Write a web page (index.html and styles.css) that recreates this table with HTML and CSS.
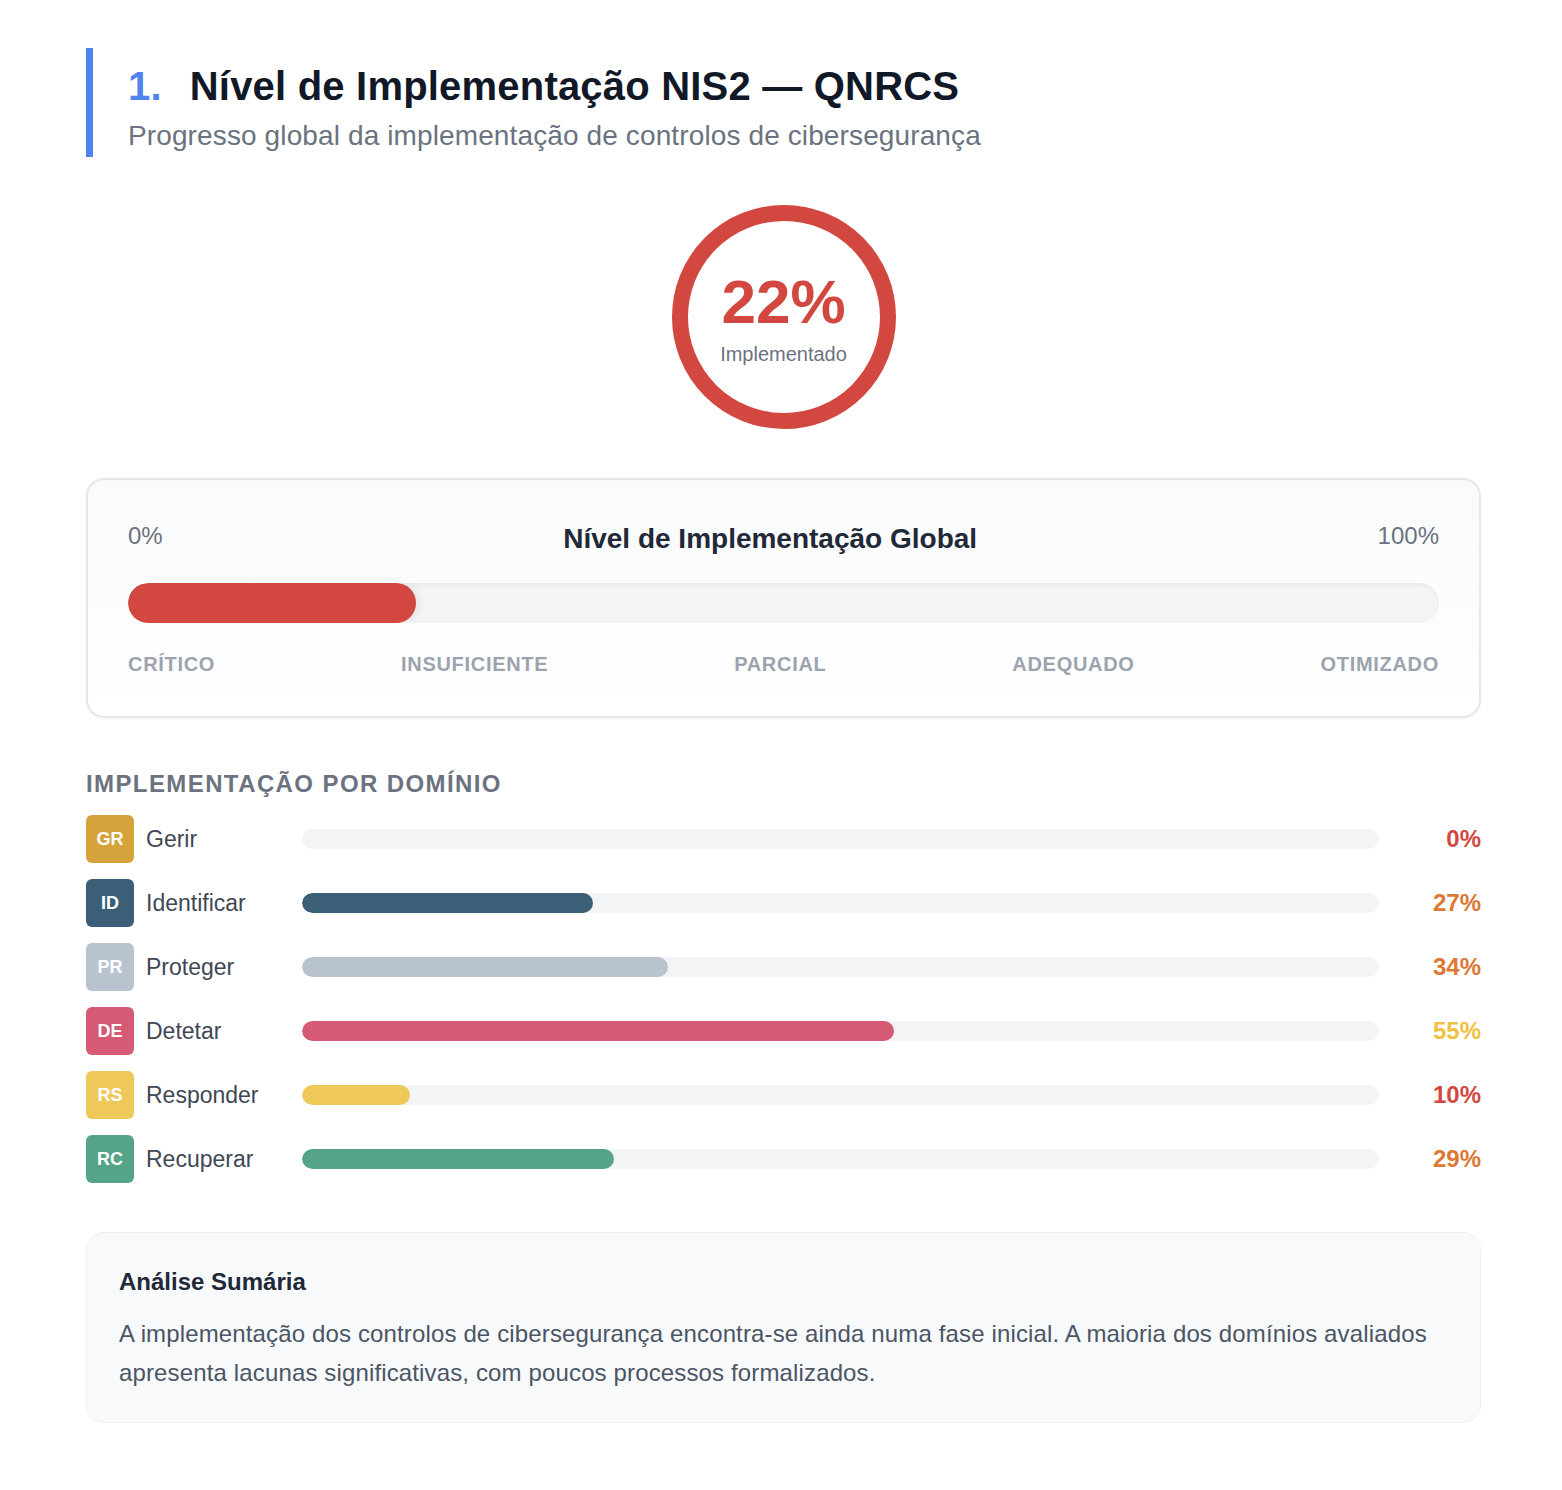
FILE: index.html
```html
<!DOCTYPE html>
<html lang="pt">
<head>
<meta charset="utf-8">
<title>Nível de Implementação NIS2 — QNRCS</title>
<link rel="stylesheet" href="styles.css">
</head>
<body>
<main class="page">
  <header class="section-header">
    <h1 class="title"><span class="num">1.</span>Nível de Implementação NIS2 — QNRCS</h1>
    <p class="subtitle">Progresso global da implementação de controlos de cibersegurança</p>
  </header>

  <div class="gauge-wrap">
    <div class="gauge">
      <div class="gauge-value">22%</div>
      <div class="gauge-label">Implementado</div>
    </div>
  </div>

  <section class="global-card">
    <div class="global-top">
      <span class="scale">0%</span>
      <span class="global-title">Nível de Implementação Global</span>
      <span class="scale">100%</span>
    </div>
    <div class="global-track"><div class="global-fill" style="width:22%"></div></div>
    <div class="levels">
      <span>CRÍTICO</span>
      <span>INSUFICIENTE</span>
      <span>PARCIAL</span>
      <span>ADEQUADO</span>
      <span>OTIMIZADO</span>
    </div>
  </section>

  <section class="domains">
    <h2 class="domains-title">IMPLEMENTAÇÃO POR DOMÍNIO</h2>
    <div class="domain-list">
      <div class="domain-row">
        <span class="badge badge-gr">GR</span>
        <span class="domain-name">Gerir</span>
        <div class="track"><div class="fill fill-gr" style="width:0%"></div></div>
        <span class="pct pct-red">0%</span>
      </div>
      <div class="domain-row">
        <span class="badge badge-id">ID</span>
        <span class="domain-name">Identificar</span>
        <div class="track"><div class="fill fill-id" style="width:27%"></div></div>
        <span class="pct pct-orange">27%</span>
      </div>
      <div class="domain-row">
        <span class="badge badge-pr">PR</span>
        <span class="domain-name">Proteger</span>
        <div class="track"><div class="fill fill-pr" style="width:34%"></div></div>
        <span class="pct pct-orange">34%</span>
      </div>
      <div class="domain-row">
        <span class="badge badge-de">DE</span>
        <span class="domain-name">Detetar</span>
        <div class="track"><div class="fill fill-de" style="width:55%"></div></div>
        <span class="pct pct-yellow">55%</span>
      </div>
      <div class="domain-row">
        <span class="badge badge-rs">RS</span>
        <span class="domain-name">Responder</span>
        <div class="track"><div class="fill fill-rs" style="width:10%"></div></div>
        <span class="pct pct-red">10%</span>
      </div>
      <div class="domain-row">
        <span class="badge badge-rc">RC</span>
        <span class="domain-name">Recuperar</span>
        <div class="track"><div class="fill fill-rc" style="width:29%"></div></div>
        <span class="pct pct-orange">29%</span>
      </div>
    </div>
  </section>

  <section class="summary">
    <h3 class="summary-title">Análise Sumária</h3>
    <p class="summary-text">A implementação dos controlos de cibersegurança encontra-se ainda numa fase inicial. A maioria dos domínios avaliados apresenta lacunas significativas, com poucos processos formalizados.</p>
  </section>
</main>
</body>
</html>
```

FILE: styles.css
```css
* { box-sizing: border-box; }

html, body {
  margin: 0;
  padding: 0;
  background: #ffffff;
}

body {
  font-family: "Liberation Sans", Arial, Helvetica, sans-serif;
  color: #1f2937;
}

.page {
  padding: 48px 81px 60px 86px;
}

/* Header */
.section-header {
  border-left: 7px solid #4f83ee;
  padding-left: 35px;
  padding-top: 12px;
  padding-bottom: 1px;
}

.title {
  margin: 0;
  font-size: 40px;
  line-height: 52px;
  font-weight: 700;
  letter-spacing: 0.2px;
  color: #111827;
}

.num {
  color: #4f83ee;
  margin-right: 28px;
}

.subtitle {
  margin: 4px 0 0;
  font-size: 28px;
  line-height: 40px;
  letter-spacing: 0.12px;
  color: #6b7280;
}

/* Gauge */
.gauge-wrap {
  display: flex;
  justify-content: center;
  padding: 48px 0 49px;
}

.gauge {
  width: 224px;
  height: 224px;
  border-radius: 50%;
  border: 16px solid #d24840;
  display: flex;
  flex-direction: column;
  align-items: center;
  justify-content: center;
  padding-top: 2px;
}

.gauge-value {
  font-size: 62px;
  line-height: 62px;
  font-weight: 700;
  color: #d24840;
}

.gauge-label {
  font-size: 20px;
  line-height: 24px;
  color: #6b7280;
  margin-top: 9px;
}

/* Global card */
.global-card {
  border: 2px solid #e5e7eb;
  border-radius: 18px;
  background: linear-gradient(180deg, #f9fafb 0%, #ffffff 100%);
  padding: 40px;
  box-shadow: 0 1px 3px rgba(0,0,0,0.04);
}

.global-top {
  display: flex;
  justify-content: space-between;
  align-items: flex-start;
  height: 36px;
}

.scale {
  font-size: 24px;
  line-height: 28px;
  color: #6b7280;
  margin-top: 2px;
}

.global-title {
  font-size: 28px;
  line-height: 32px;
  font-weight: 700;
  color: #1f2937;
  margin-top: 3px;
}

.global-track {
  margin-top: 27px;
  height: 40px;
  border-radius: 20px;
  background: #f3f4f6;
  box-shadow: inset 0 2px 4px rgba(0,0,0,0.05);
  overflow: hidden;
}

.global-fill {
  height: 100%;
  border-radius: 20px;
  background: #d24840;
  box-shadow: 2px 0 8px rgba(0,0,0,0.08);
}

.levels {
  display: flex;
  justify-content: space-between;
  margin-top: 29px;
  font-size: 20px;
  line-height: 24px;
  font-weight: 700;
  letter-spacing: 0.7px;
  color: #9ca3af;
}

/* Domains */
.domains {
  margin-top: 52px;
}

.domains-title {
  margin: 0 0 17px;
  font-size: 24px;
  line-height: 28px;
  font-weight: 700;
  letter-spacing: 1.4px;
  color: #6b7280;
}

.domain-list {
  display: flex;
  flex-direction: column;
  gap: 16px;
}

.domain-row {
  display: grid;
  grid-template-columns: 48px 144px 1fr 102px;
  column-gap: 12px;
  align-items: center;
  height: 48px;
}

.badge {
  width: 48px;
  height: 48px;
  border-radius: 6px;
  display: flex;
  align-items: center;
  justify-content: center;
  color: #ffffff;
  font-weight: 700;
  font-size: 18px;
}

.badge-gr { background: #d5a33b; }
.badge-id { background: #3c5f78; }
.badge-pr { background: #b8c3cf; }
.badge-de { background: #d55a74; }
.badge-rs { background: #eec95a; }
.badge-rc { background: #55a487; }

.domain-name {
  font-size: 23px;
  color: #3f4755;
  white-space: nowrap;
}

.track {
  height: 20px;
  border-radius: 10px;
  background: #f3f4f6;
  overflow: hidden;
  margin-right: -12px;
}

.fill {
  height: 100%;
  border-radius: 10px;
}

.fill-gr { background: #d5a33b; }
.fill-id { background: #3c5f78; }
.fill-pr { background: #b8c3cf; }
.fill-de { background: #d55a74; }
.fill-rs { background: #eec95a; }
.fill-rc { background: #55a487; }

.pct {
  text-align: right;
  font-size: 24px;
  font-weight: 700;
}

.pct-red { color: #d24840; }
.pct-orange { color: #dd7834; }
.pct-yellow { color: #f0c140; }

/* Summary */
.summary {
  margin-top: 49px;
  background: #f8f9fb;
  border: 1px solid #eef0f3;
  border-radius: 18px;
  padding: 35px 32px 30px;
}

.summary-title {
  margin: 0 0 18px;
  font-size: 24px;
  line-height: 28px;
  font-weight: 700;
  color: #1f2937;
}

.summary-text {
  margin: 0;
  font-size: 24px;
  line-height: 39px;
  letter-spacing: 0.14px;
  color: #4b5563;
}
```
